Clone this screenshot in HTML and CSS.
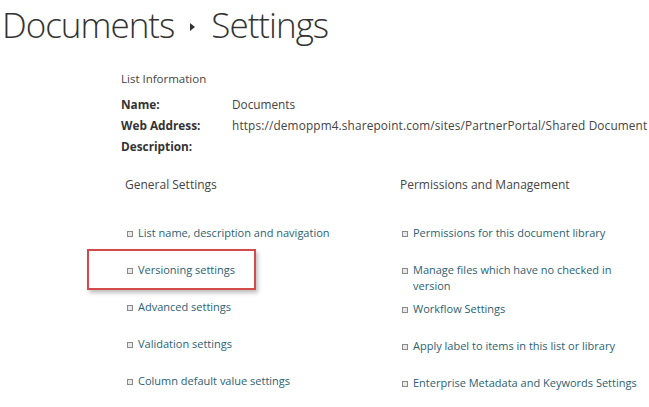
FILE: index.html
```html
<!DOCTYPE html>
<html>
<head>
<meta charset="utf-8">
<link rel="stylesheet" href="styles.css">
</head>
<body>
<h1 class="title"><span>Documents</span><span class="sep"></span><span>Settings</span></h1>
<section class="info">
  <div class="info-head">List Information</div>
  <div class="info-grid">
    <div class="lbl">Name:</div><div class="val">Documents</div>
    <div class="lbl">Web Address:</div><div class="val url">https://demoppm4.sharepoint.com/sites/PartnerPortal/Shared Document</div>
    <div class="lbl">Description:</div><div class="val"></div>
  </div>
</section>
<section class="cols">
  <div class="col col-left">
    <div class="col-head">General Settings</div>
    <ul class="links">
      <li><a>List name, description and navigation</a></li>
      <li class="hl"><a>Versioning settings</a></li>
      <li><a>Advanced settings</a></li>
      <li><a>Validation settings</a></li>
      <li><a>Column default value settings</a></li>
    </ul>
  </div>
  <div class="col col-right">
    <div class="col-head">Permissions and Management</div>
    <ul class="links">
      <li><a>Permissions for this document library</a></li>
      <li class="two"><a>Manage files which have no checked in version</a></li>
      <li><a>Workflow Settings</a></li>
      <li><a>Apply label to items in this list or library</a></li>
      <li><a>Enterprise Metadata and Keywords Settings</a></li>
    </ul>
  </div>
</section>
</body>
</html>
```
FILE: styles.css
```css
html, body { margin: 0; padding: 0; background: #fff; overflow: hidden; }
body {
  width: 649px; height: 407px;
  font-family: "Open Sans", "Segoe UI", sans-serif;
  color: #444;
}
.title {
  margin: 0;
  padding: 0 0 0 2px;
  height: 48px;
  display: flex;
  align-items: center;
  font-weight: 300;
  font-size: 35px;
  color: #333;
  letter-spacing: -1px;
  white-space: nowrap;
}
.sep {
  width: 0; height: 0;
  border-left: 5px solid #333;
  border-top: 4px solid transparent;
  border-bottom: 4px solid transparent;
  margin: 6px 16px 0 16px;
}
.info { padding: 22px 0 0 121px; font-size: 11.8px; white-space: nowrap; }
.info-head { color: #444; line-height: 18px; font-size: 11.5px; }
.info-grid {
  margin-top: 5px;
  display: grid;
  grid-template-columns: 111px auto;
  grid-auto-rows: 21px;
  align-items: center;
}
.lbl { font-weight: 700; color: #333; }
.val { color: #444; }
.url { letter-spacing: 0.15px; }
.cols { display: flex; padding: 21px 0 0 125px; font-size: 11px; }
.col-left { width: 275px; }
.col-right { flex: 1; }
.col-head { font-size: 12px; color: #444; line-height: 16px; }
.links { list-style: none; margin: 32px 0 0; padding: 0; }
.links li {
  display: flex; align-items: flex-start;
  line-height: 16px;
  min-height: 37px;
  padding-left: 2px;
}
.links li.two { min-height: 39px; }
.links li::before {
  content: "";
  flex: none;
  width: 4px; height: 4px;
  border: 1px solid #8a8a8a;
  background: #e9e9e9;
  margin: 6px 5px 0 0;
}
.links a { color: #2c5f73; }
.col-right .links li.two a { max-width: 210px; }
.hl { position: relative; }
.hl::after {
  content: "";
  position: absolute;
  left: -38px; top: -13px;
  width: 165px; height: 37px;
  border: 2px solid #d24a4a;
  box-shadow: 2px 3px 4px rgba(0,0,0,0.25);
}
```
